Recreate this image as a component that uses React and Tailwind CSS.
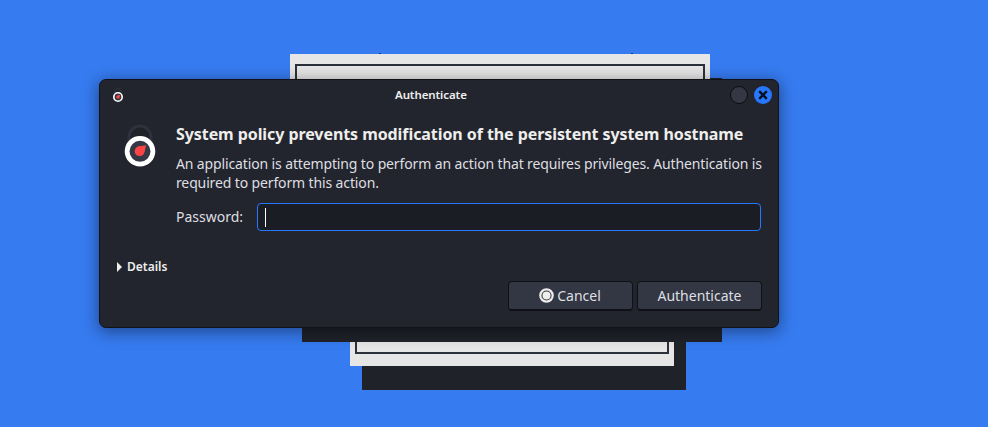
import React from "react";

function LockIcon({ className }) {
  return (
    <svg className={className} viewBox="0 0 32 44">
      <path d="M5 18V13a11 11 0 0 1 22 0v5" fill="#20222a" stroke="#2e303b" strokeWidth="3" />
      <circle cx="16" cy="28.4" r="15" fill="#15171e" opacity=".55" />
      <circle cx="16" cy="27.3" r="12.9" fill="#353844" stroke="#ffffff" strokeWidth="4.8" />
      <circle cx="15.600" cy="27.200" r="4.900" fill="#fd4444" />
      <path d="M14.500 22.400 22 21.200 20.500 28Z" fill="#fd4444" />
    </svg>
  );
}

function SmallLockIcon() {
  return (
    <svg className="h-[15px] w-[12px]" viewBox="0 0 12 15">
      <path d="M2.500 5V4a3.500 3.500 0 0 1 7 0v1" fill="none" stroke="#2e303b" />
      <circle cx="6" cy="9" r="4.200" fill="#353844" stroke="#ffffff" strokeWidth="1.600" />
      <circle cx="6" cy="9" r="1.700" fill="#fd4444" />
      <path d="M6 7.300 8.300 6.800 7.800 9Z" fill="#fd4444" />
    </svg>
  );
}

function Backdrop() {
  return (
    <>
      <div className="absolute left-[379px] top-[53px] h-px w-[2px] bg-[#173a7c]" />
      <div className="absolute left-[631px] top-[53px] h-px w-[2px] bg-[#173a7c]" />
      <div className="absolute left-[302px] top-[78px] h-[264px] w-[420px] bg-[#1f2229]" />
      <div className="absolute left-[362px] top-[342px] h-[48px] w-[324px] bg-[#1f2229]" />
      <div className="absolute left-[290px] top-[54px] h-[60px] w-[420px] bg-[#e6e6e6] px-[5px] pt-[10px]">
        <div className="h-[50px] border-2 border-b-0 border-[#2b303b]" />
      </div>
      <div className="absolute left-[350px] top-[342px] h-[24px] w-[324px] bg-[#e6e6e6] px-[5px]">
        <div className="h-[12px] border-2 border-t-0 border-[#2b303b]" />
      </div>
    </>
  );
}

function TitleBar() {
  return (
    <header className="flex h-[30px] items-center justify-between pl-[12px] pr-[6px]">
      <SmallLockIcon />
      <h1 className="ml-[271px] flex-1 text-[11.5px] leading-[16px] font-semibold tracking-[-0.1px] whitespace-nowrap">
        Authenticate
      </h1>
      <div className="flex justify-end gap-[6px]">
        <span className="size-[18px] rounded-full border border-[#0b0c10] bg-[#353844]" />
        <span className="flex size-[18px] items-center justify-center rounded-full bg-[#2777ff]">
          <svg className="size-[10px]" viewBox="0 0 10 10">
            <path d="M1.200 1.200 8.800 8.800M8.800 1.200 1.200 8.800" stroke="#07101f" strokeWidth="2.400" />
          </svg>
        </span>
      </div>
    </header>
  );
}

const buttonClass =
  "flex h-[30px] w-[125px] items-center justify-center rounded-[4px] border border-b-2 border-[#101116] bg-[#333643] text-[14px] whitespace-nowrap text-[#dedfe1]";

export default function App() {
  return (
    <main className="relative h-[427px] w-[988px] overflow-hidden bg-[#367bf0] font-['Noto_Sans',sans-serif] text-[#eeeeec]">
      <Backdrop />
      <section className="absolute left-[99px] top-[79px] flex h-[249px] w-[680px] flex-col rounded-[7px] border border-[#101217] bg-[#23252e] shadow-[0_3px_16px_1px_rgba(0,0,0,0.42)]">
        <TitleBar />
        <div className="flex pl-[24px] pt-[13px]">
          <LockIcon className="mt-px h-[44px] w-[32px] shrink-0" />
          <div className="ml-[20px] w-[590px]">
            <h2 className="text-[16px] leading-[22px] font-bold tracking-[-0.075px] whitespace-nowrap">
              System policy prevents modification of the persistent system hostname
            </h2>
            <p className="mt-[9px] text-[14px] leading-[19px] tracking-[-0.13px] whitespace-nowrap text-[#dedfe1]">
              An application is attempting to perform an action that requires privileges. Authentication is
              <br />
              required to perform this action.
            </p>
            <label className="mt-[11px] flex items-center text-[14px] leading-[20px] text-[#dedfe1]">
              <span className="w-[81px]">Password:</span>
              <span className="flex h-[28px] w-[504px] items-center rounded-[4px] border border-[#2777ff] bg-[#1b1d24] pl-[7px]">
                <span className="h-[19px] w-px bg-white" />
              </span>
            </label>
          </div>
        </div>
        <div className="mt-[27px] flex items-center gap-[5px] pl-[17px] text-[12px] leading-[18px] font-semibold">
          <svg className="h-[10px] w-[5px]" viewBox="0 0 5 10">
            <path d="M0 0 5 5 0 10Z" fill="#eeeeec" />
          </svg>
          Details
        </div>
        <div className="mt-[5px] flex justify-end gap-[4px] pr-[16px]">
          <button className={buttonClass}>
            <svg className="mr-[3px] -ml-px size-[15px]" viewBox="0 0 15 15">
              <circle cx="7.500" cy="7.500" r="6.200" fill="#333643" stroke="#eeeeec" strokeWidth="2.200" />
              <circle cx="7.500" cy="7.500" r="4" fill="#eeeeec" />
            </svg>
            Cancel
          </button>
          <button className={buttonClass}>Authenticate</button>
        </div>
      </section>
    </main>
  );
}
